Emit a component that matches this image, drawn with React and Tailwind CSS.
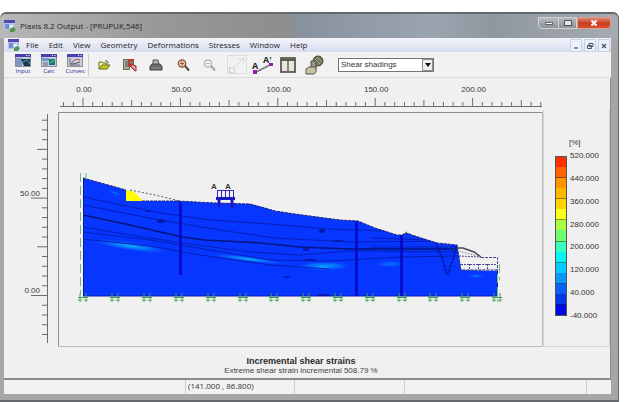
import React, { useState } from 'react';

const MENUS = ['File', 'Edit', 'View', 'Geometry', 'Deformations', 'Stresses', 'Window', 'Help'];

const BANDS = [
  '#ff3000', '#ff6400', '#ff9600', '#ffb800', '#ffd400', '#faff20', '#a8ff40',
  '#70ff70', '#38ffc0', '#08f4f4', '#08ccff', '#0898f8', '#0860f4', '#0038e8', '#0008e8',
];

const LEVELS = ['520.000', '440.000', '360.000', '280.000', '200.000', '120.000', '40.000', '-40.000'];

// one ruler step is 5 units
const STEP = 9.74;

const AppIcon = ({ className }) => (
  <svg viewBox="0 0 12 12" className={className} aria-hidden="true">
    <rect x="0" y="0" width="11" height="10" fill="#b9c2dd" />
    <rect x="0" y="0" width="11" height="3" fill="#5046b4" />
    <path d="M1 4h4v5H1z" fill="#6f8fd8" />
    <path d="M6 5h3v3H6z" fill="#e8ecf8" />
    <path d="M6 9l3-2 3 2-2 3H6z" fill="#4f9a4a" />
  </svg>
);

const ProgramIcon = ({ kind }) => (
  <svg viewBox="0 0 16 14" className="h-[14px] w-4" aria-hidden="true">
    <rect x="0.5" y="0.5" width="15" height="12" fill="#c9ccd6" stroke="#8a8ca0" />
    <rect x="0" y="0" width="16" height="3" fill="#4b3fb0" />
    <path d="M11 1.500h1M13.500 1.500h1" stroke="#fff" />
    {kind === 'Input' && (
      <>
        <rect x="1" y="4" width="6" height="8" fill="#8097bd" />
        <path d="M6 5h9v7H9z" fill="#17384f" />
        <path d="M8 8l4-2 3 4" fill="none" stroke="#4aa0a8" />
      </>
    )}
    {kind === 'Calc' && (
      <>
        <rect x="1" y="4" width="7" height="3" fill="#6d9ecb" />
        <rect x="8" y="5" width="6" height="6" fill="#157b78" />
        <path d="M2 9h5M2 11h5" stroke="#606880" />
        <path d="M9 9l4-3" stroke="#73d48a" />
      </>
    )}
    {kind === 'Curves' && (
      <>
        <path d="M3 4v7h10" fill="none" stroke="#707080" />
        <path d="M4 10c3-5 6-5 9-4" fill="none" stroke="#a04060" />
        <path d="M4 10c4 0 6-1 9-2" fill="none" stroke="#505868" />
      </>
    )}
  </svg>
);

const ToolButton = ({ label, className, children }) => (
  <button aria-label={label} className={`flex shrink-0 items-center justify-center ${className}`}>
    {children}
  </button>
);

const TitleBar = () => (
  <header className="flex h-6 items-center rounded-t-md bg-[linear-gradient(to_right,#b8b8b8,#989898_25%,#8e8e8e_46%,#88929f_49%,#9ba5b0_70%,#8f979f_80%,#a6acb0)] pl-1">
    <AppIcon className="h-3 w-3" />
    <h1 className="ml-1 flex-1 text-[8px] text-[#252525]">Plaxis 8.2 Output - [PRUPUK,546]</h1>
    <div className="flex h-full items-start pt-[3px] pr-[7px]">
      <button aria-label="Minimize" className="flex h-3 w-[21px] items-center justify-center rounded-bl-sm border border-[#d0d3d6] bg-linear-to-b from-[#b7bbc0] to-[#8d9298]">
        <span className="h-[3px] w-2 border border-[#666] bg-white" />
      </button>
      <button aria-label="Maximize" className="flex h-3 w-[18px] items-center justify-center border border-l-0 border-[#d0d3d6] bg-linear-to-b from-[#b7bbc0] to-[#8d9298]">
        <span className="h-[6px] w-2 border border-[#555] bg-[#e5e5e5]" />
      </button>
      <button aria-label="Close" className="flex h-3 w-[34px] items-center justify-center rounded-br-sm border border-[#dba090] bg-linear-to-b from-[#dc8874] via-[#cc3d1d] to-[#d6502f]">
        <svg viewBox="0 0 8 8" className="h-2 w-2">
          <path d="M1.500 1.500l5 5M6.500 1.500l-5 5" stroke="#fff" strokeWidth="1.800" />
        </svg>
      </button>
    </div>
  </header>
);

const MenuBar = () => (
  <nav className="flex h-[14px] items-center bg-linear-to-b from-[#f3f5fb] to-[#d8dcee] pl-1">
    <AppIcon className="h-3 w-3" />
    <div className="ml-[6px] flex flex-1 gap-[10px] text-[8px] leading-3 text-[#1c1c28]">
      {MENUS.map((name) => (
        <button key={name}>{name}</button>
      ))}
    </div>
    <div className="flex h-full gap-[2px] pt-px pr-px">
      <button aria-label="Minimize document" className="flex w-3 items-center justify-center border border-[#c5d3e5] bg-[#eaf1fa]">
        <svg viewBox="0 0 8 8" className="h-2 w-2"><path d="M2 6h4" stroke="#4d586a" strokeWidth="1.300" /></svg>
      </button>
      <button aria-label="Restore document" className="flex w-3 items-center justify-center border border-[#c5d3e5] bg-[#eaf1fa]">
        <svg viewBox="0 0 8 8" className="h-2 w-2" fill="#eaf1fa" stroke="#4d586a">
          <path d="M3 1.500h4v3H3zM1.500 3.500h4v3h-4z" />
        </svg>
      </button>
      <button aria-label="Close document" className="flex w-3 items-center justify-center border border-[#c5d3e5] bg-[#eaf1fa]">
        <svg viewBox="0 0 8 8" className="h-2 w-2"><path d="M2 2l4 4M6 2L2 6" stroke="#4d586a" strokeWidth="1.400" /></svg>
      </button>
    </div>
  </nav>
);

const Toolbar = () => {
  const [mode, setMode] = useState('Shear shadings');

  return (
    <div className="flex h-[26px] items-center border-b border-[#dcdcdc] bg-[#f2f2f2] pl-[6px]">
      {['Input', 'Calc', 'Curves'].map((name) => (
        <button key={name} className="flex w-[26px] shrink-0 flex-col items-center text-[6px] leading-[7px] text-[#2a2a9a]">
          <ProgramIcon kind={name} />
          {name}
        </button>
      ))}
      <span className="h-[22px] w-px shrink-0 bg-[#cfcfcf]" />

      <ToolButton label="Open" className="ml-[7px] w-4">
        <svg viewBox="0 0 14 12" className="h-3 w-[14px]">
          <path d="M2 10V3h3l1 1h4v2" fill="#f4f2a0" stroke="#6a6a20" />
          <path d="M2 10l3-4h8l-3 4z" fill="#c4cc28" stroke="#6a6a20" />
          <path d="M8 2c2-1 3 0 3 2" fill="none" stroke="#4c6030" />
        </svg>
      </ToolButton>
      <ToolButton label="Copy" className="ml-[10px] w-4">
        <svg viewBox="0 0 16 14" className="h-[14px] w-4">
          <path d="M1.500 1.500h6v10h-6z" fill="#a8b0a0" stroke="#5d6b5d" />
          <path d="M3 4h3M3 6h3M3 8h3" stroke="#4b5a4b" />
          <path d="M6 1h6v8H6z" fill="#c63434" />
          <path d="M8 3h3v3H8z" fill="#4c9460" />
          <path d="M9 6l5 2v5l-2-1-3-3z" fill="#e79a8c" stroke="#863030" />
        </svg>
      </ToolButton>
      <ToolButton label="Print" className="ml-[10px] w-4">
        <svg viewBox="0 0 16 14" className="h-[14px] w-4">
          <path d="M5 7V2h5l1 5" fill="#b8b8b8" stroke="#505050" />
          <path d="M2 8l2-2h8l2 2v4H2z" fill="#6a6a6a" stroke="#484848" />
          <path d="M3 10h10" stroke="#8c8c8c" />
        </svg>
      </ToolButton>
      <ToolButton label="Zoom in" className="ml-3 w-4">
        <svg viewBox="0 0 16 14" className="h-[14px] w-4">
          <circle cx="6" cy="5.500" r="3.700" fill="#f4c8a8" stroke="#775846" strokeWidth="1.300" />
          <path d="M4 5.500h4M6 3.500v4" stroke="#b05030" />
          <path d="M9 8l4 4.500" stroke="#54463c" strokeWidth="2" />
        </svg>
      </ToolButton>
      <ToolButton label="Zoom out" className="ml-[10px] w-4">
        <svg viewBox="0 0 16 14" className="h-[14px] w-4">
          <circle cx="6" cy="5.500" r="3.700" fill="#f0f0f0" stroke="#b0b0b0" strokeWidth="1.200" />
          <path d="M4 5.500h4" stroke="#bbb" />
          <path d="M9 8l4 4.500" stroke="#a4a4a4" strokeWidth="2" />
        </svg>
      </ToolButton>
      <ToolButton label="Reset view" className="ml-[9px] w-5">
        <svg viewBox="0 0 20 20" className="h-5 w-5" fill="none" stroke="#c6c6c6">
          <path d="M0.500 0.500h19v18H0.500z" stroke="#dcdcdc" />
          <path d="M2.500 12.500h5v5h-5zM9 11l7-7M12 3.500h5v5" strokeDasharray="2 1" />
        </svg>
      </ToolButton>
      <ToolButton label="Cross section" className="ml-1 w-6">
        <svg viewBox="0 0 24 22" className="h-[22px] w-6">
          <path d="M5 18L19 11" stroke="#777" strokeWidth="1.400" />
          <rect x="2" y="16" width="4" height="4" fill="#9a18b0" />
          <rect x="18" y="9" width="4" height="3" fill="#9a18b0" />
          <text x="1" y="15" fontSize="9" fontWeight="700" fill="#282828">A</text>
          <text x="12" y="9" fontSize="9" fontWeight="700" fill="#282828">A'</text>
        </svg>
      </ToolButton>
      <ToolButton label="Table" className="ml-[5px] w-4">
        <svg viewBox="0 0 16 16" className="h-4 w-4">
          <rect x="1" y="1" width="14" height="14" fill="#e8e7df" stroke="#4a4740" strokeWidth="1.600" />
          <path d="M1 3h14" stroke="#5e5a52" strokeWidth="2" />
          <path d="M8 2v13" stroke="#5e5a52" strokeWidth="1.400" />
        </svg>
      </ToolButton>
      <ToolButton label="Materials" className="ml-2 w-5">
        <svg viewBox="0 0 20 20" className="h-5 w-5">
          <circle cx="14" cy="6" r="5" fill="#77755f" stroke="#45443a" />
          <path d="M11 4l5 5M13 2l5 5" stroke="#a9a78a" />
          <path d="M7 6h5v8H7z" fill="#989680" stroke="#55544a" />
          <path d="M2 14l3-2h7v5l-2 2H2z" fill="#c6c4a4" stroke="#55544a" />
        </svg>
      </ToolButton>

      <div className="relative ml-[14px] h-[14px] w-24 shrink-0">
        <select
          aria-label="Output quantity"
          value={mode}
          onChange={(e) => setMode(e.target.value)}
          className="block h-full w-full appearance-none border border-[#747474] bg-white pl-[2px] font-['Liberation_Sans',sans-serif] text-[8px] leading-3 text-[#333]"
        >
          <option>Shear shadings</option>
          <option>Contour lines</option>
        </select>
        <span className="pointer-events-none absolute top-px right-px flex h-3 w-[11px] items-center justify-center border border-[#909090] bg-[#eee]">
          <svg viewBox="0 0 6 4" className="h-1 w-[6px]"><path d="M0 0h6L3 4z" fill="#111" /></svg>
        </span>
      </div>
    </div>
  );
};

const Rulers = () => {
  const top = [];
  for (let i = -2; i <= 47; i++) {
    const x = 83 + i * STEP;
    top.push(<path key={i} d={`M${x} 106V${i % 10 === 0 ? 98 : i % 5 === 0 ? 100 : 102}`} />);
  }
  const side = [];
  for (let i = -4; i <= 18; i++) {
    const y = 295.5 - i * STEP;
    side.push(<path key={i} d={`M47.500 ${y}H${i % 10 === 0 ? 31 : i % 5 === 0 ? 37 : 42}`} />);
  }
  return (
    <g stroke="#6c6c6c" fill="none">
      <path d="M60 106.500H542M47.500 114V343" />
      {top}
      {side}
      <g fill="#3a3a3a" stroke="none" fontSize="8">
        {['0.00', '50.00', '100.00', '150.00', '200.00'].map((t, i) => (
          <text key={t} x={84 + i * STEP * 10} y="92" textAnchor="middle">{t}</text>
        ))}
        <text x="40" y="196" textAnchor="end">50.00</text>
        <text x="40" y="293" textAnchor="end">0.00</text>
      </g>
    </g>
  );
};

const Support = ({ x }) => (
  <path
    d={`M${x - 5} 297.500h10M${x - 3} 293v8M${x + 3} 293v8M${x - 5} 299.500l2 2 2-2M${x + 1} 299.500l2 2 2-2`}
    fill="none"
    stroke="#38a348"
  />
);

const SoilModel = () => (
  <g>
    <defs>
      <clipPath id="soil">
        <path d="M83 178L126 190V201L178 201 215 203 250 204 265 208 275 211 295 214 340 220 358 221 375 228 397 235 402 235 406 233 412 235 437 243 457 245 461 270 497 271V296H83z" />
      </clipPath>
      <radialGradient id="glow">
        <stop offset="0" stopColor="#08b4ff" />
        <stop offset="0.500" stopColor="#0880ff" stopOpacity="0.700" />
        <stop offset="1" stopColor="#0838ff" stopOpacity="0" />
      </radialGradient>
    </defs>

    <g clipPath="url(#soil)">
      <rect x="83" y="170" width="416" height="127" fill="#0636ff" />
      <ellipse cx="130" cy="246" rx="42" ry="5" fill="url(#glow)" transform="rotate(8 130 246)" />
      <ellipse cx="248" cy="259" rx="42" ry="3" fill="url(#glow)" transform="rotate(7 248 259)" />
      <ellipse cx="324" cy="266" rx="30" ry="5" fill="url(#glow)" />
      <ellipse cx="322" cy="267" rx="15" ry="3" fill="url(#glow)" />
      <ellipse cx="390" cy="264" rx="18" ry="4" fill="url(#glow)" opacity="0.500" />
      <ellipse cx="115" cy="193" rx="9" ry="2" fill="url(#glow)" opacity="0.500" transform="rotate(20 115 193)" />
      <ellipse cx="476" cy="276" rx="9" ry="2" fill="url(#glow)" opacity="0.600" />
      <g fill="none" stroke="#0620b4" strokeWidth="1">
        <path d="M83 197L160 213 210 220 270 224 330 229 460 234" />
        <path d="M83 205L160 220 220 230 275 238 350 242 460 241" />
        <path d="M83 227L130 235 190 244 250 252 300 255 350 251 462 252" />
        <path d="M83 232L150 240 210 250 270 260 330 261 400 257 462 256" />
        <path d="M83 239L150 246 200 255 270 265 330 269" />
        <path d="M370 247H462M370 238L462 241" />
      </g>
      <path d="M83 215L130 225 182 237 205 240 260 243 300 247 350 249 462 249" fill="none" stroke="#06147c" strokeWidth="1.600" />
      <g stroke="#0508c4" strokeWidth="2.600">
        <path d="M180.500 202V275M356.500 221V296M401.500 234V296" />
      </g>
      <path d="M435 242L442 258 447 274M457 246L448 275" fill="none" stroke="#0818b0" strokeWidth="2" strokeDasharray="3 1" />
      <g fill="#0618a8">
        <ellipse cx="148" cy="211" rx="3" ry="1" />
        <ellipse cx="161" cy="221" rx="4" ry="2" />
        <ellipse cx="322" cy="231" rx="3" ry="2" />
        <ellipse cx="338" cy="241" rx="5" ry="1" />
        <ellipse cx="306" cy="249" rx="3" ry="2" />
        <ellipse cx="310" cy="260" rx="6" ry="1" />
        <ellipse cx="287" cy="277" rx="3" ry="1" />
        <ellipse cx="324" cy="295" rx="7" ry="1" />
      </g>
    </g>

    {/* outline of the ground surface */}
    <path d="M83 178L126 190M142 201L178 201 215 203 250 204 265 208 275 211 295 214 340 220 358 221 375 228 397 235 402 235 406 233 412 235 437 243 457 245 461 270H497" fill="none" stroke="#1a247c" strokeDasharray="3 1" />
    <path d="M83.500 178V296M83 296H497.500V270" fill="none" stroke="#0818a8" />
    <path d="M126 190L134 192 142 200V201H126z" fill="#fffc00" />
    <path d="M130 190L155 195 180 201M402 235L406 232 412 235" fill="none" stroke="#55555f" strokeDasharray="2 2" />

    {/* excavated part */}
    <g fill="none" stroke="#4c4a90">
      <path d="M457 248H463L474 252 481 257" stroke="#4a4858" strokeWidth="1.500" />
      <path d="M481 257.500H497.500V271" strokeDasharray="3 1" />
      <path d="M459 256L481 257M461 264.500H497M469.500 264V270M478.500 264V270M487.500 264V270" strokeDasharray="2 1" />
      <path d="M437 243L462 252 482 257" strokeDasharray="1 2" />
    </g>

    {/* building load */}
    <g stroke="#3028c4" fill="none">
      <path d="M217.500 190V199M221.500 190V199M225.500 190V199M229.500 190V199M233.500 190V199M217 190.500H234" />
      <path d="M216 198.500H235M219 198v9M232 198v10" stroke="#1818c0" strokeWidth="3" />
      <path d="M216 203.500H234" strokeDasharray="2 2" />
    </g>
    <g fontSize="8" fontWeight="700" fill="#363b36">
      <text x="211" y="189">A</text>
      <text x="225" y="189">A</text>
    </g>

    {/* fixities */}
    <path d="M80.500 173V294M86 173V178M499.500 264V280M497.500 274V302" fill="none" stroke="#74b67c" strokeDasharray="9 4" />
    {[83, 115, 147, 179, 211, 243, 274, 306, 338, 370, 402, 433, 465, 497].map((x) => (
      <Support key={x} x={x} />
    ))}
  </g>
);

const Legend = () => (
  <aside className="mt-8 mb-[3px] flex w-[67px] shrink-0 flex-col border-r border-b border-l border-[#d4d4d4] pt-7 pl-[11px] font-['Liberation_Sans',sans-serif]">
    <p className="pl-[14px] text-[8px] leading-[10px] text-[#333]">[%]</p>
    <div className="mt-[8px] flex h-40 gap-[3px]">
      <div className="flex w-3 flex-col border border-[#555]">
        {BANDS.map((color, i) => (
          <span key={color} className={`flex-1 ${i % 2 === 1 ? 'border-b border-black/40' : ''}`} style={{ backgroundColor: color }} />
        ))}
      </div>
      <ol className="-my-[5px] flex flex-col justify-between text-[8px] leading-[10px] text-[#333]">
        {LEVELS.map((level) => (
          <li key={level}>{level}</li>
        ))}
      </ol>
    </div>
  </aside>
);

const App = () => {
  return (
    <div className="flex min-h-screen flex-col bg-white pt-3 pr-2 font-['Open_Sans',sans-serif]">
      <div className="flex flex-1 flex-col rounded-t-md border-t-2 border-r border-b-2 border-[#65696c] bg-[#a6a6a6]">
        <TitleBar />
        <div className="mr-[7px] mb-[6px] ml-1 flex flex-1 flex-col bg-[#f0f0f0]">
          <MenuBar />
          <Toolbar />
          <main className="flex flex-1 flex-col border-r border-b-2 border-[#8c8c8c]">
            <div className="flex flex-1">
              <svg viewBox="4 78 539 272" className="min-w-0 flex-1 font-['Liberation_Sans',sans-serif]" role="img" aria-label="Incremental shear strains">
                <Rulers />
                <path d="M58.500 346V112.500H542" fill="none" stroke="#8e8e8e" />
                <path d="M58 346.500H542.500V112" fill="none" stroke="#bcbcbc" />
                <SoilModel />
              </svg>
              <Legend />
            </div>
            <div className="flex flex-col items-center pt-[6px] pb-[2px] pr-3 font-['Liberation_Sans',sans-serif] text-[#2b2b2b]">
              <h2 className="text-[9px] leading-[10px] font-bold">Incremental shear strains</h2>
              <p className="text-[8px] leading-[10px] text-[#444]">Extreme shear strain incremental 508.79 %</p>
            </div>
          </main>
          <footer className="flex h-[14px] items-center bg-[#f2f2f2] text-[8px] leading-3 text-[#333]">
            <span className="h-full w-[30%] border-r border-[#cfcfcf]" />
            <span className="h-full w-[18%] border-r border-[#cfcfcf] pl-[2px]">(141.000 , 86.800)</span>
            <span className="h-full w-[18%] border-r border-[#cfcfcf]" />
            <span className="h-full w-[30%] border-r border-[#cfcfcf]" />
          </footer>
        </div>
      </div>
    </div>
  );
};

export default App;
